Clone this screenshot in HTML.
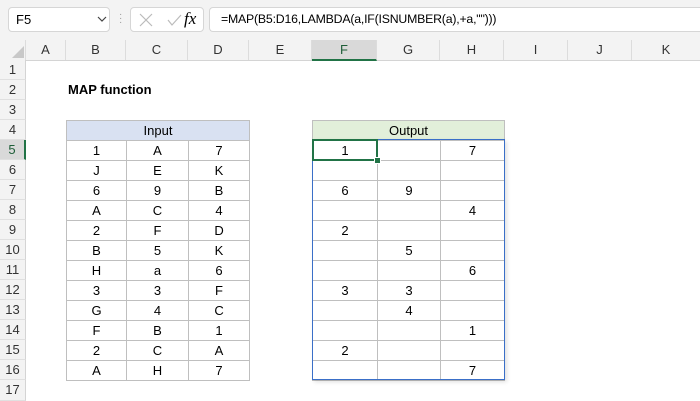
<!DOCTYPE html><html><head><style>
body{margin:0;width:700px;height:400px;overflow:hidden;background:#fff;font-family:"Liberation Sans",sans-serif;font-size:13px;color:#000;position:relative}
.a{position:absolute}
.top{left:0;top:0;width:700px;height:40px;background:#f3f3f3}
.box{background:#fff;border:1px solid #d6d6d6;border-radius:4px;height:23px;top:7px}
.colh{top:40px;height:20px;background:#f3f3f3;border-bottom:1px solid #d4d4d4;left:0;width:700px}
.ch{position:absolute;top:40px;height:20px;line-height:20px;text-align:center;color:#333;border-right:1px solid #dcdcdc;font-size:13px}
.rh{position:absolute;left:0;width:25px;height:20px;line-height:20px;text-align:center;color:#333;background:#f3f3f3;border-bottom:1px solid #e0e0e0;border-right:1px solid #d4d4d4;font-size:13px}
table{position:absolute;border-collapse:collapse;table-layout:fixed}
td{height:19px;padding:0;text-align:center;border:1px solid #bfbfbf;font-size:13px;line-height:19px}
</style></head><body>
<div class="a top"></div>
<div class="a box" style="left:8px;width:100px"><span class="a" style="left:7px;top:4px">F5</span><svg class="a" style="left:88px;top:8px" width="10" height="7"><path d="M1 1L5 5L9 1" fill="none" stroke="#444" stroke-width="1.2"/></svg></div>
<div class="a" style="left:119px;top:13px;color:#999;font-size:10px;line-height:4px">·<br>·<br>·</div>
<div class="a box" style="left:130px;width:72px"><svg class="a" style="left:8px;top:5px" width="60" height="14"><path d="M1 1L13 13M13 1L1 13" stroke="#bbb" stroke-width="1.2"/><path d="M29 7L33 12L42 2" fill="none" stroke="#bbb" stroke-width="1.2"/></svg><span class="a" style="left:53px;top:1px;font-family:'Liberation Serif',serif;font-style:italic;font-size:17px">fx</span></div>
<div class="a box" style="left:209px;width:490px;border-right:none;border-radius:4px 0 0 4px"><span class="a" style="left:11px;top:4px;font-size:12.3px;letter-spacing:-0.2px">=MAP(B5:D16,LAMBDA(a,IF(ISNUMBER(a),+a,"")))</span></div>
<div class="a colh"></div>
<div class="ch" style="left:0;width:25px"><svg class="a" style="left:12px;top:6px" width="12" height="12"><path d="M12 0L12 12L0 12Z" fill="#c8c8c8"/></svg></div>
<div class="ch" style="left:26px;width:39px">A</div><div class="ch" style="left:66px;width:59px">B</div><div class="ch" style="left:126px;width:61px">C</div><div class="ch" style="left:188px;width:60px">D</div><div class="ch" style="left:249px;width:62px">E</div><div class="ch" style="left:312px;width:64px;background:#d9d9d9;border-bottom:2px solid #217346;height:19px;color:#1e5e38">F</div><div class="ch" style="left:377px;width:62px">G</div><div class="ch" style="left:440px;width:63px">H</div><div class="ch" style="left:504px;width:63px">I</div><div class="ch" style="left:568px;width:63px">J</div><div class="ch" style="left:632px;width:68px">K</div>
<div class="rh" style="top:60px;height:19px">1</div><div class="rh" style="top:80px;height:19px">2</div><div class="rh" style="top:100px;height:19px">3</div><div class="rh" style="top:120px;height:19px">4</div><div class="rh" style="top:140px;height:19px;background:#d9d9d9;border-right:2px solid #217346;width:24px;color:#1e5e38">5</div><div class="rh" style="top:160px;height:19px">6</div><div class="rh" style="top:180px;height:19px">7</div><div class="rh" style="top:200px;height:19px">8</div><div class="rh" style="top:220px;height:19px">9</div><div class="rh" style="top:240px;height:19px">10</div><div class="rh" style="top:260px;height:19px">11</div><div class="rh" style="top:280px;height:19px">12</div><div class="rh" style="top:300px;height:19px">13</div><div class="rh" style="top:320px;height:19px">14</div><div class="rh" style="top:340px;height:19px">15</div><div class="rh" style="top:360px;height:19px">16</div><div class="rh" style="top:380px;height:20px">17</div>
<div class="a" style="left:68px;top:82px;font-weight:bold;font-size:13px">MAP function</div>
<table style="left:66px;top:120px;width:183px">
<colgroup><col style="width:60px"><col style="width:62px"><col style="width:61px"></colgroup>
<tr><td colspan="3" style="background:#d9e1f2">Input</td></tr>
<tr><td>1</td><td>A</td><td>7</td></tr><tr><td>J</td><td>E</td><td>K</td></tr><tr><td>6</td><td>9</td><td>B</td></tr><tr><td>A</td><td>C</td><td>4</td></tr><tr><td>2</td><td>F</td><td>D</td></tr><tr><td>B</td><td>5</td><td>K</td></tr><tr><td>H</td><td>a</td><td>6</td></tr><tr><td>3</td><td>3</td><td>F</td></tr><tr><td>G</td><td>4</td><td>C</td></tr><tr><td>F</td><td>B</td><td>1</td></tr><tr><td>2</td><td>C</td><td>A</td></tr><tr><td>A</td><td>H</td><td>7</td></tr>
</table>
<table style="left:312px;top:120px;width:192px">
<colgroup><col style="width:65px"><col style="width:63px"><col style="width:64px"></colgroup>
<tr><td colspan="3" style="background:#e2efda">Output</td></tr>
<tr><td>1</td><td></td><td>7</td></tr><tr><td></td><td></td><td></td></tr><tr><td>6</td><td>9</td><td></td></tr><tr><td></td><td></td><td>4</td></tr><tr><td>2</td><td></td><td></td></tr><tr><td></td><td>5</td><td></td></tr><tr><td></td><td></td><td>6</td></tr><tr><td>3</td><td>3</td><td></td></tr><tr><td></td><td>4</td><td></td></tr><tr><td></td><td></td><td>1</td></tr><tr><td>2</td><td></td><td></td></tr><tr><td></td><td></td><td>7</td></tr>
</table>
<div class="a" style="left:312px;top:139px;border:1px solid #3a6fc8;box-sizing:border-box;width:193px;height:241px;box-shadow:2px 2px 4px rgba(0,0,0,.12)"></div>
<div class="a" style="left:312px;top:139px;width:66px;height:22px;border:2px solid #217346;box-sizing:border-box"></div>
<div class="a" style="left:374px;top:157px;width:5px;height:5px;background:#217346;border:1px solid #fff"></div>
</body></html>
